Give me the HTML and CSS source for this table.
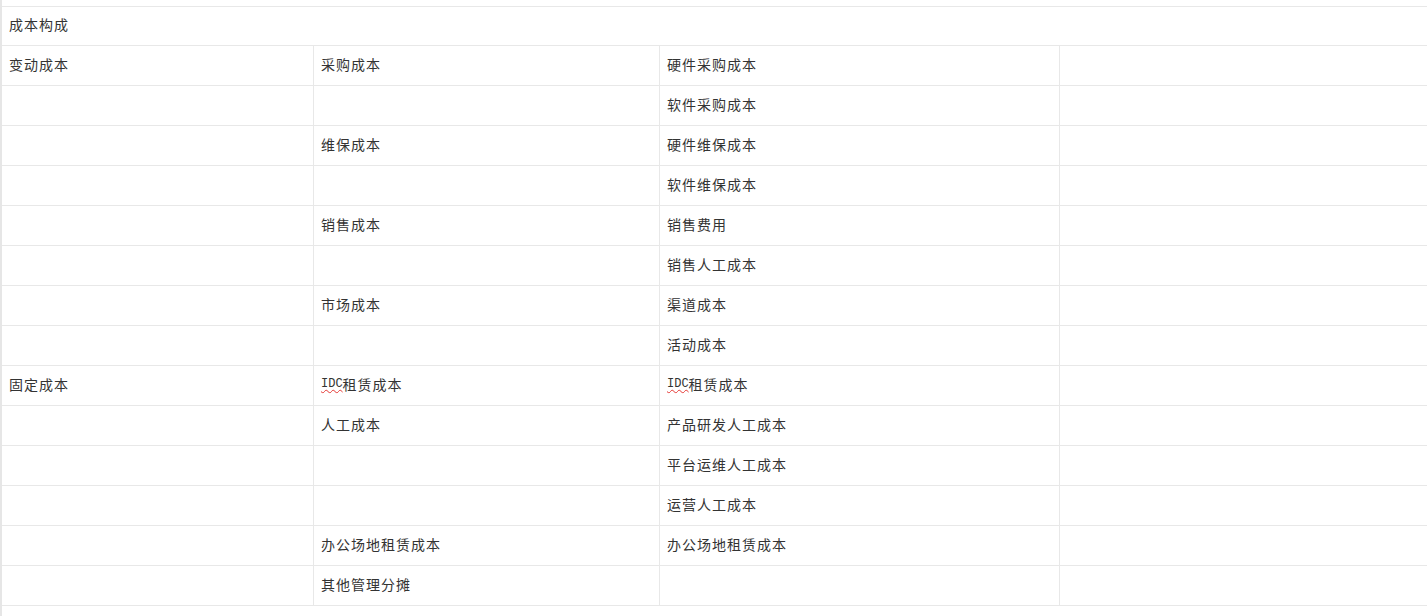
FILE: index.html
```html
<!DOCTYPE html>
<html lang="zh-CN">
<head>
<meta charset="utf-8">
<title>成本构成</title>
<link rel="stylesheet" href="styles.css">
</head>
<body>
<div class="strip"></div>
<main class="main">
  <div class="sheet">
    <div class="row head"><div class="cell">成本构成</div></div>
    <div class="row"><div class="cell c1">变动成本</div><div class="cell c2">采购成本</div><div class="cell c3">硬件采购成本</div><div class="cell c4"></div></div>
    <div class="row"><div class="cell c1"></div><div class="cell c2"></div><div class="cell c3">软件采购成本</div><div class="cell c4"></div></div>
    <div class="row"><div class="cell c1"></div><div class="cell c2">维保成本</div><div class="cell c3">硬件维保成本</div><div class="cell c4"></div></div>
    <div class="row"><div class="cell c1"></div><div class="cell c2"></div><div class="cell c3">软件维保成本</div><div class="cell c4"></div></div>
    <div class="row"><div class="cell c1"></div><div class="cell c2">销售成本</div><div class="cell c3">销售费用</div><div class="cell c4"></div></div>
    <div class="row"><div class="cell c1"></div><div class="cell c2"></div><div class="cell c3">销售人工成本</div><div class="cell c4"></div></div>
    <div class="row"><div class="cell c1"></div><div class="cell c2">市场成本</div><div class="cell c3">渠道成本</div><div class="cell c4"></div></div>
    <div class="row"><div class="cell c1"></div><div class="cell c2"></div><div class="cell c3">活动成本</div><div class="cell c4"></div></div>
    <div class="row"><div class="cell c1">固定成本</div><div class="cell c2"><span class="latin">IDC</span>租赁成本</div><div class="cell c3"><span class="latin">IDC</span>租赁成本</div><div class="cell c4"></div></div>
    <div class="row"><div class="cell c1"></div><div class="cell c2">人工成本</div><div class="cell c3">产品研发人工成本</div><div class="cell c4"></div></div>
    <div class="row"><div class="cell c1"></div><div class="cell c2"></div><div class="cell c3">平台运维人工成本</div><div class="cell c4"></div></div>
    <div class="row"><div class="cell c1"></div><div class="cell c2"></div><div class="cell c3">运营人工成本</div><div class="cell c4"></div></div>
    <div class="row"><div class="cell c1"></div><div class="cell c2">办公场地租赁成本</div><div class="cell c3">办公场地租赁成本</div><div class="cell c4"></div></div>
    <div class="row"><div class="cell c1"></div><div class="cell c2">其他管理分摊</div><div class="cell c3"></div><div class="cell c4"></div></div>
  </div>
</main>
</body>
</html>
```

FILE: styles.css
```css
html, body {
  margin: 0;
  padding: 0;
  background: #ffffff;
}
body {
  display: flex;
  min-height: 100vh;
  font-family: "Noto Sans CJK SC", "Noto Sans", sans-serif;
  font-size: 14px;
  color: #333333;
  overflow: hidden;
}
.strip {
  width: 2px;
  flex: none;
  background: #e6e6e6;
}
.main {
  flex: 1;
  padding-top: 6px;
}
.sheet {
  border-top: 1px solid #e8e8e8;
}
.row {
  display: grid;
  grid-template-columns: 311px 346px 400px 1fr;
  height: 40px;
  box-sizing: border-box;
  border-bottom: 1px solid #e8e8e8;
}
.row.head {
  grid-template-columns: 1fr;
  height: 39px;
}
.cell {
  display: flex;
  align-items: center;
  padding-left: 7px;
  padding-bottom: 4px;
  letter-spacing: 1px;
  white-space: nowrap;
  line-height: 1;
}
.c2, .c3, .c4 {
  border-left: 1px solid #e8e8e8;
}
.latin {
  font-family: "Liberation Mono", "DejaVu Sans Mono", monospace;
  font-size: 12px;
  letter-spacing: 0;
  text-decoration: underline wavy #e53935;
  text-decoration-thickness: 1px;
  text-underline-offset: 2px;
}
```
